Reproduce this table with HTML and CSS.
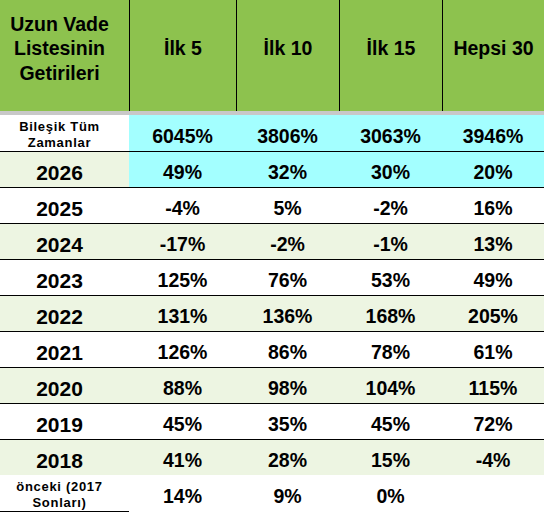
FILE: index.html
```html
<!DOCTYPE html>
<html lang="tr">
<head>
<meta charset="utf-8">
<title>Uzun Vade Listesinin Getirileri</title>
<link rel="stylesheet" href="styles.css">
</head>
<body>
<div class="table">
  <div class="row head">
    <div class="cell first">Uzun Vade<br>Listesinin<br>Getirileri</div>
    <div class="cell">İlk 5</div>
    <div class="cell">İlk 10</div>
    <div class="cell">İlk 15</div>
    <div class="cell">Hepsi 30</div>
  </div>
  <div class="sep"></div>
  <div class="row total">
    <div class="cell first label">Bileşik Tüm<br>Zamanlar</div>
    <div class="cell val">6045%</div>
    <div class="cell val">3806%</div>
    <div class="cell val">3063%</div>
    <div class="cell val">3946%</div>
  </div>
  <div class="row line current">
    <div class="cell first year">2026</div>
    <div class="cell val">49%</div>
    <div class="cell val">32%</div>
    <div class="cell val">30%</div>
    <div class="cell val">20%</div>
  </div>
  <div class="row line white">
    <div class="cell first year">2025</div>
    <div class="cell val">-4%</div>
    <div class="cell val">5%</div>
    <div class="cell val">-2%</div>
    <div class="cell val">16%</div>
  </div>
  <div class="row line tint">
    <div class="cell first year">2024</div>
    <div class="cell val">-17%</div>
    <div class="cell val">-2%</div>
    <div class="cell val">-1%</div>
    <div class="cell val">13%</div>
  </div>
  <div class="row line white">
    <div class="cell first year">2023</div>
    <div class="cell val">125%</div>
    <div class="cell val">76%</div>
    <div class="cell val">53%</div>
    <div class="cell val">49%</div>
  </div>
  <div class="row line tint">
    <div class="cell first year">2022</div>
    <div class="cell val">131%</div>
    <div class="cell val">136%</div>
    <div class="cell val">168%</div>
    <div class="cell val">205%</div>
  </div>
  <div class="row line white">
    <div class="cell first year">2021</div>
    <div class="cell val">126%</div>
    <div class="cell val">86%</div>
    <div class="cell val">78%</div>
    <div class="cell val">61%</div>
  </div>
  <div class="row line tint">
    <div class="cell first year">2020</div>
    <div class="cell val">88%</div>
    <div class="cell val">98%</div>
    <div class="cell val">104%</div>
    <div class="cell val">115%</div>
  </div>
  <div class="row line white">
    <div class="cell first year">2019</div>
    <div class="cell val">45%</div>
    <div class="cell val">35%</div>
    <div class="cell val">45%</div>
    <div class="cell val">72%</div>
  </div>
  <div class="row tint">
    <div class="cell first year">2018</div>
    <div class="cell val">41%</div>
    <div class="cell val">28%</div>
    <div class="cell val">15%</div>
    <div class="cell val">-4%</div>
  </div>
  <div class="row last">
    <div class="cell first label underline">önceki (2017<br>Sonları)</div>
    <div class="cell val">14%</div>
    <div class="cell val">9%</div>
    <div class="cell val">0%</div>
    <div class="cell val"></div>
  </div>
</div>
</body>
</html>
```

FILE: styles.css
```css
* { box-sizing: border-box; }

html, body {
  margin: 0;
  padding: 0;
  background: #ffffff;
}

body {
  font-family: "Liberation Sans", Arial, sans-serif;
  font-weight: bold;
  color: #000000;
}

.table {
  width: 544px;
  display: flex;
  flex-direction: column;
}

.row {
  display: grid;
  grid-template-columns: 129px 107px 103px 103px 102px;
}

.cell {
  display: flex;
  align-items: center;
  justify-content: center;
  text-align: center;
}

.first {
  padding-right: 10px;
}

/* header */
.head {
  height: 111px;
  background: #8dc24e;
}

.head .cell {
  font-size: 19.5px;
  line-height: 24.3px;
  padding-bottom: 14px;
}

.head .cell + .cell {
  border-left: 1px solid #000000;
}

.head .first {
  padding-right: 10px;
}

.sep {
  height: 4px;
  background: #c8c8c8;
}

/* body rows */
.total {
  height: 37px;
  border-bottom: 1px solid #000000;
}

.total .val,
.current .val {
  background: #a3ffff;
}

.line {
  height: 36px;
  border-bottom: 1px solid #000000;
}

.row.tint,
.current .first {
  background: #edf5e2;
}

.row.tint:not(.line) {
  height: 35px;
}

.val {
  font-size: 19.5px;
  line-height: 23px;
  padding-top: 6px;
}

.year {
  font-size: 21px;
  line-height: 23px;
  padding-top: 6px;
}

.label {
  font-size: 13px;
  line-height: 16px;
  letter-spacing: 0.7px;
  padding-top: 4px;
}

.last {
  height: 37px;
}

.last .val {
  padding-top: 5px;
}

.underline {
  border-bottom: 1px solid #000000;
}
```
